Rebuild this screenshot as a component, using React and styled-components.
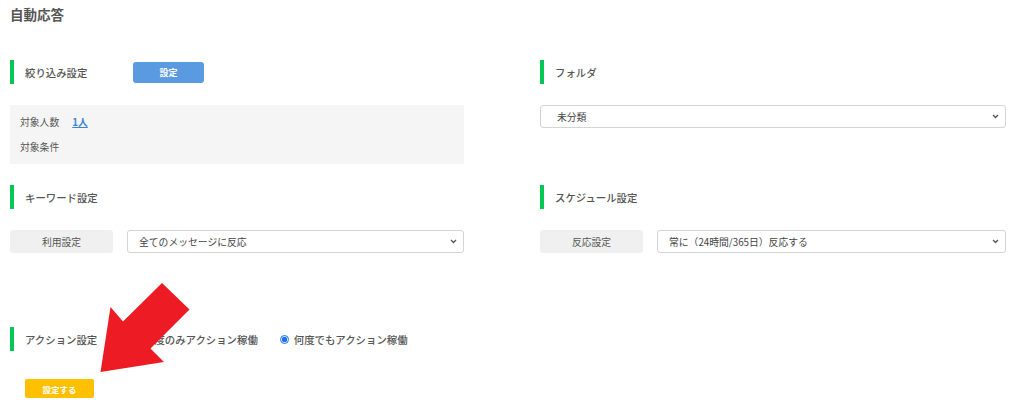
import React from "react";
import styled, { createGlobalStyle } from "styled-components";

const Global = createGlobalStyle`
  html, body {
    margin: 0;
    padding: 0;
    background: #fff;
  }
  body {
    font-family: "Noto Sans CJK JP", "Noto Sans", sans-serif;
    color: #555;
  }
`;

const Page = styled.div`
  position: relative;
  width: 1024px;
  height: 418px;
  padding: 4px 10px 0 10px;
  box-sizing: border-box;
  overflow: hidden;
`;

const Title = styled.h1`
  margin: 0;
  font-size: 13.5px;
  font-weight: 700;
  line-height: 20px;
  color: #555;
`;

const Grid = styled.div`
  display: grid;
  grid-template-columns: 454px 466px;
  column-gap: 76px;
  row-gap: 21px;
  align-items: start;
  margin-top: 36px;
`;

const Section = styled.section`
  display: flex;
  flex-direction: column;
  gap: 21px;
`;

const SectionHead = styled.div`
  display: flex;
  align-items: center;
  height: 24px;
  border-left: 4px solid #06c755;
  padding-left: 11px;
`;

const HeadLabel = styled.span`
  width: 108px;
  font-size: 10.4px;
  font-weight: 500;
  color: #555;
  white-space: nowrap;
`;

const BlueButton = styled.button`
  width: 71px;
  height: 21px;
  border: none;
  border-radius: 3px;
  background: #5a9ae0;
  color: #fff;
  font-family: inherit;
  font-size: 9px;
  font-weight: 700;
  padding: 0;
`;

const InfoBox = styled.div`
  display: flex;
  flex-direction: column;
  gap: 11px;
  padding: 10px;
  background: #f5f5f5;
  font-size: 9.8px;
`;

const InfoRow = styled.div`
  display: flex;
  align-items: center;
  height: 14px;
  gap: 13px;
`;

const CountLink = styled.a`
  color: #3f84d4;
  font-weight: 700;
  text-decoration: underline;
`;

const FieldRow = styled.div`
  display: flex;
  align-items: center;
  gap: 14px;
`;

const FieldLabel = styled.div`
  width: 103px;
  height: 23px;
  flex-shrink: 0;
  display: flex;
  align-items: center;
  justify-content: center;
  background: #f0f0f0;
  border-radius: 3px;
  font-size: 9.8px;
  color: #555;
`;

const SelectWrap = styled.div`
  position: relative;
  flex: ${(p) => (p.$grow ? "1 1 0" : "0 0 auto")};
  height: 23px;
`;

const Select = styled.select`
  appearance: none;
  display: block;
  width: 100%;
  height: 23px;
  box-sizing: border-box;
  border: 1px solid #d4d4d4;
  border-radius: 3px;
  background: #fff;
  padding: 0 24px 0 ${(p) => p.$pad || 11}px;
  font-family: inherit;
  font-size: 9.8px;
  color: #444;
  outline: none;
`;

const Chevron = styled.svg`
  position: absolute;
  right: 7px;
  top: 9px;
  pointer-events: none;
`;

const ActionSection = styled.section`
  margin-top: 74px;
`;

const RadioGroup = styled.div`
  display: flex;
  align-items: center;
  gap: 22px;
  margin-left: -3px;
`;

const RadioOption = styled.label`
  display: flex;
  align-items: center;
  gap: 5px;
  font-size: 10.4px;
  font-weight: 500;
  color: #555;
  white-space: nowrap;
`;

const Radio = styled.input`
  width: 9px;
  height: 9px;
  margin: 0;
  accent-color: #1a73e8;
`;

const SubmitButton = styled.button`
  display: block;
  margin: 28px 0 0 15px;
  width: 69px;
  height: 19px;
  border: none;
  border-radius: 2px;
  background: #ffc000;
  color: #fff;
  font-family: inherit;
  font-size: 8.5px;
  font-weight: 700;
  padding: 0;
`;

const Arrow = styled.svg`
  position: absolute;
  left: 95px;
  top: 278px;
`;

function SelectBox({ value, pad, grow }) {
  return (
    <SelectWrap $grow={grow}>
      <Select $pad={pad} defaultValue={value}>
        <option>{value}</option>
      </Select>
      <Chevron width="7" height="5" viewBox="0 0 7 5">
        <path d="M1 1 L3.5 3.5 L6 1" fill="none" stroke="#555" strokeWidth="1.3" />
      </Chevron>
    </SelectWrap>
  );
}

export default function App() {
  return (
    <Page>
      <Global />
      <Title>自動応答</Title>
      <Grid>
        <Section>
          <SectionHead>
            <HeadLabel>絞り込み設定</HeadLabel>
            <BlueButton>設定</BlueButton>
          </SectionHead>
          <InfoBox>
            <InfoRow>
              <span>対象人数</span>
              <CountLink>1人</CountLink>
            </InfoRow>
            <InfoRow>
              <span>対象条件</span>
            </InfoRow>
          </InfoBox>
        </Section>
        <Section>
          <SectionHead>
            <HeadLabel>フォルダ</HeadLabel>
          </SectionHead>
          <SelectBox value="未分類" pad={16} />
        </Section>
        <Section>
          <SectionHead>
            <HeadLabel>キーワード設定</HeadLabel>
          </SectionHead>
          <FieldRow>
            <FieldLabel>利用設定</FieldLabel>
            <SelectBox value="全てのメッセージに反応" grow />
          </FieldRow>
        </Section>
        <Section>
          <SectionHead>
            <HeadLabel>スケジュール設定</HeadLabel>
          </SectionHead>
          <FieldRow>
            <FieldLabel>反応設定</FieldLabel>
            <SelectBox value="常に（24時間/365日）反応する" grow />
          </FieldRow>
        </Section>
      </Grid>
      <ActionSection>
        <SectionHead>
          <HeadLabel>アクション設定</HeadLabel>
          <RadioGroup>
            <RadioOption>
              <Radio type="radio" name="action" />
              一度のみアクション稼働
            </RadioOption>
            <RadioOption>
              <Radio type="radio" name="action" defaultChecked />
              何度でもアクション稼働
            </RadioOption>
          </RadioGroup>
        </SectionHead>
        <SubmitButton>設定する</SubmitButton>
      </ActionSection>
      <Arrow width="100" height="100" viewBox="0 0 100 100">
        <polygon
          points="5.5,94 15.5,29 28,43.5 67,5 94.5,31.5 55.5,70.5 69,84"
          fill="#ed1c24"
        />
      </Arrow>
    </Page>
  );
}
